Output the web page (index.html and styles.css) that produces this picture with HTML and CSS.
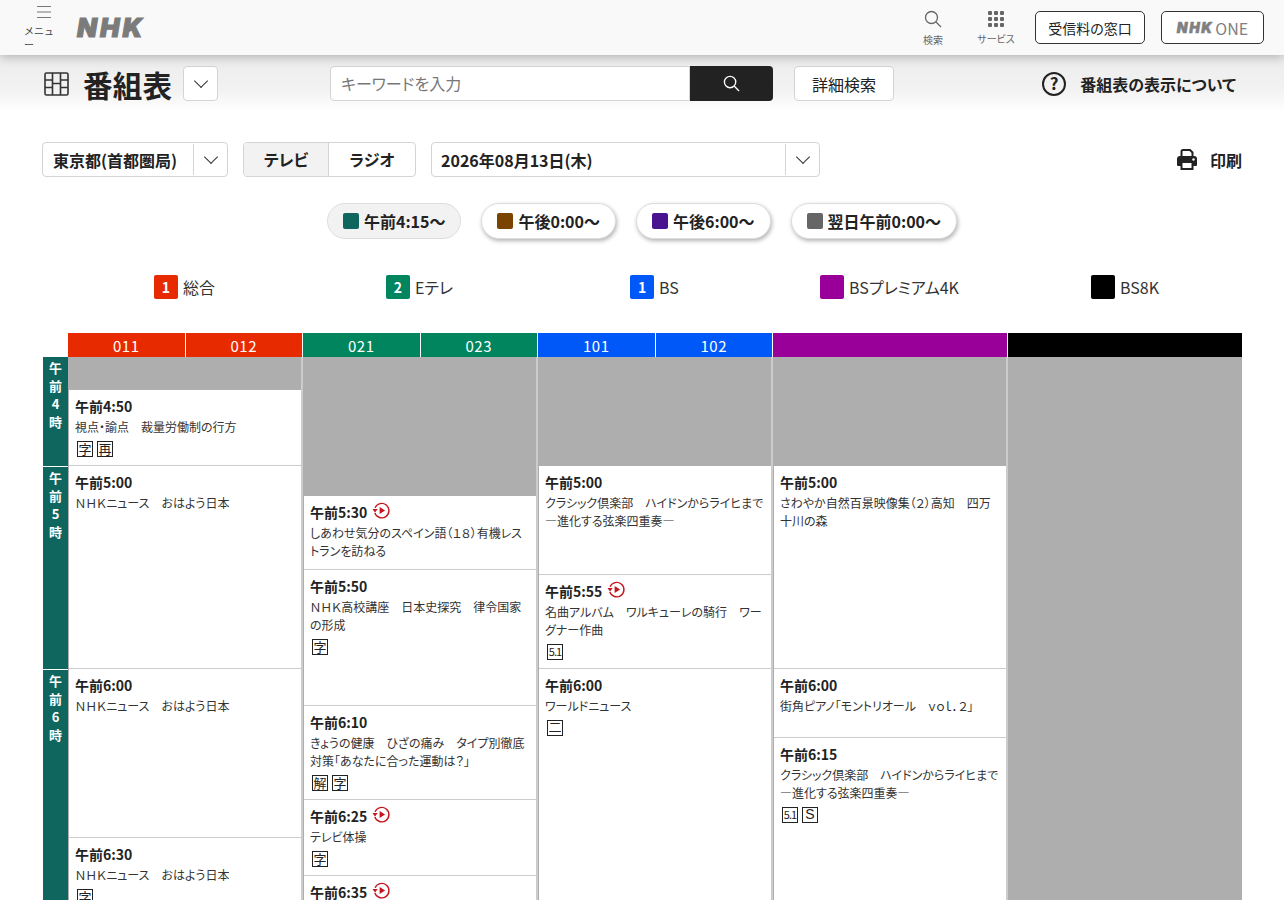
FILE: index.html
```html
<!DOCTYPE html>
<html lang="ja">
<head>
    <meta charset="UTF-8">
    <meta name="viewport" content="width=device-width, initial-scale=1.0">
    <title>番組表</title>
    <link rel="stylesheet" href="styles.css">
</head>
<body>
<div class="page">
    <header class="site-header">
        <div class="header-left">
            <div class="header-tool menu-tool">
                <svg width="16" height="14" viewBox="0 0 16 14"><path d="M1 1.5h14M1 7h14M1 12.5h14" stroke="#777" stroke-width="1.2" fill="none"/></svg>
                <span>メニュー</span>
            </div>
            <div class="nhk-logo">NHK</div>
        </div>
        <div class="header-right">
            <div class="header-tool search-tool">
                <svg width="18" height="18" viewBox="0 0 18 18"><circle cx="7.5" cy="7.5" r="6" stroke="#666" stroke-width="1.3" fill="none"/><path d="M12 12l5 5" stroke="#666" stroke-width="1.3"/></svg>
                <span>検索</span>
            </div>
            <div class="header-tool service-tool">
                <svg width="16" height="16" viewBox="0 0 16 16" fill="#666"><rect x="0" y="0" width="4" height="4" rx="1"/><rect x="6" y="0" width="4" height="4" rx="1"/><rect x="12" y="0" width="4" height="4" rx="1"/><rect x="0" y="6" width="4" height="4" rx="1"/><rect x="6" y="6" width="4" height="4" rx="1"/><rect x="12" y="6" width="4" height="4" rx="1"/><rect x="0" y="12" width="4" height="4" rx="1"/><rect x="6" y="12" width="4" height="4" rx="1"/><rect x="12" y="12" width="4" height="4" rx="1"/></svg>
                <span>サービス</span>
            </div>
            <a class="header-btn receipt-btn">受信料の窓口</a>
            <a class="header-btn one-btn"><span class="one-logo">NHK</span><span class="one-text">ONE</span></a>
        </div>
    </header>

    <section class="sub-header">
        <div class="title-area">
            <svg class="title-icon" width="25" height="24" viewBox="0 0 25 24" fill="none" stroke="#333" stroke-width="1.6"><rect x="1" y="1" width="23" height="22" rx="1.5"/><path d="M8.500 1v22M16.500 1v22M1 8h7.500M16.500 8h7.500M1 15.500h7.500M8.500 11.500h8M16.500 15.500h7.500"/></svg>
            <h1>番組表</h1>
            <button class="chevron-box"><span class="chevron"></span></button>
        </div>
        <div class="search-area">
            <div class="search-input">キーワードを入力</div>
            <div class="search-btn">
                <svg width="17" height="17" viewBox="0 0 18 18"><circle cx="7.5" cy="7.5" r="6" stroke="#fff" stroke-width="1.4" fill="none"/><path d="M12 12l5 5" stroke="#fff" stroke-width="1.4"/></svg>
            </div>
        </div>
        <button class="detail-btn">詳細検索</button>
        <div class="about-link">
            <svg width="26" height="26" viewBox="0 0 26 26"><circle cx="13" cy="13" r="11" stroke="#222" stroke-width="2" fill="none"/><text x="13" y="19" text-anchor="middle" class="about-mark">?</text></svg>
            <span>番組表の表示について</span>
        </div>
    </section>

    <main class="content">
        <div class="filter-row">
            <div class="select-box area-select">
                <span class="select-text">東京都(首都圏局)</span>
                <span class="select-arrow"><span class="chevron"></span></span>
            </div>
            <div class="media-tabs">
                <span class="media-tab active">テレビ</span>
                <span class="media-tab">ラジオ</span>
            </div>
            <div class="select-box date-select">
                <span class="select-text">2026年08月13日(木)</span>
                <span class="select-arrow"><span class="chevron"></span></span>
            </div>
            <div class="print-link">
                <svg width="20" height="21" viewBox="0 0 20 21"><path d="M4.500 8V2.500a1.500 1.500 0 0 1 1.500-1.500h7l2.500 2.500V8" fill="#fff" stroke="#222" stroke-width="2"/><path d="M3 7h14a3 3 0 0 1 3 3v6a1 1 0 0 1-1 1H1a1 1 0 0 1-1-1v-6a3 3 0 0 1 3-3z" fill="#222"/><rect x="4.500" y="13" width="11" height="7" fill="#fff" stroke="#222" stroke-width="2"/><circle cx="16.500" cy="10.500" r="1.200" fill="#fff"/></svg>
                <span>印刷</span>
            </div>
        </div>

        <div class="time-pills">
            <span class="pill active"><i class="swatch morning"></i>午前4:15〜</span>
            <span class="pill"><i class="swatch noon"></i>午後0:00〜</span>
            <span class="pill"><i class="swatch evening"></i>午後6:00〜</span>
            <span class="pill"><i class="swatch night"></i>翌日午前0:00〜</span>
        </div>

        <div class="channel-legend">
            <div class="legend-item"><span class="legend-badge ch-red">1</span>総合</div>
            <div class="legend-item"><span class="legend-badge ch-green">2</span>Eテレ</div>
            <div class="legend-item"><span class="legend-badge ch-blue">1</span>BS</div>
            <div class="legend-item"><span class="legend-badge ch-purple"></span>BSプレミアム4K</div>
            <div class="legend-item"><span class="legend-badge ch-black"></span>BS8K</div>
        </div>

        <div class="schedule">
            <div class="channel-head">
                <div class="head-cell ch-red"><span>011</span><span>012</span></div>
                <div class="head-cell ch-green"><span>021</span><span>023</span></div>
                <div class="head-cell ch-blue"><span>101</span><span>102</span></div>
                <div class="head-cell ch-purple"></div>
                <div class="head-cell ch-black"></div>
            </div>
            <div class="schedule-body">
                <div class="hours">
                    <div class="hour hour-4"><span>午</span><span>前</span><span>4</span><span>時</span></div>
                    <div class="hour hour-5"><span>午</span><span>前</span><span>5</span><span>時</span></div>
                    <div class="hour hour-6"><span>午</span><span>前</span><span>6</span><span>時</span></div>
                </div>

                <div class="column">
                    <div class="no-air" style="height:33px"></div>
                    <div class="program" style="height:76px">
                        <div class="time">午前4:50</div>
                        <div class="name">視点・諭点　裁量労働制の行方</div>
                        <div class="tags"><span class="tag">字</span><span class="tag">再</span></div>
                    </div>
                    <div class="program" style="height:203px">
                        <div class="time">午前5:00</div>
                        <div class="name">ＮＨＫニュース　おはよう日本</div>
                    </div>
                    <div class="program" style="height:169px">
                        <div class="time">午前6:00</div>
                        <div class="name">ＮＨＫニュース　おはよう日本</div>
                    </div>
                    <div class="program" style="height:120px">
                        <div class="time">午前6:30</div>
                        <div class="name">ＮＨＫニュース　おはよう日本</div>
                        <div class="tags"><span class="tag">字</span></div>
                    </div>
                </div>

                <div class="column">
                    <div class="no-air" style="height:139px"></div>
                    <div class="program" style="height:74px">
                        <div class="time">午前5:30<svg class="replay"><use href="#replay-icon"/></svg></div>
                        <div class="name">しあわせ気分のスペイン語（１８）有機レストランを訪ねる</div>
                    </div>
                    <div class="program" style="height:136px">
                        <div class="time">午前5:50</div>
                        <div class="name">ＮＨＫ高校講座　日本史探究　律令国家の形成</div>
                        <div class="tags"><span class="tag">字</span></div>
                    </div>
                    <div class="program" style="height:94px">
                        <div class="time">午前6:10</div>
                        <div class="name">きょうの健康　ひざの痛み　タイプ別徹底対策「あなたに合った運動は？」</div>
                        <div class="tags"><span class="tag">解</span><span class="tag">字</span></div>
                    </div>
                    <div class="program" style="height:76px">
                        <div class="time">午前6:25<svg class="replay"><use href="#replay-icon"/></svg></div>
                        <div class="name">テレビ体操</div>
                        <div class="tags"><span class="tag">字</span></div>
                    </div>
                    <div class="program" style="height:60px">
                        <div class="time">午前6:35<svg class="replay"><use href="#replay-icon"/></svg></div>
                    </div>
                </div>

                <div class="column">
                    <div class="no-air" style="height:109px"></div>
                    <div class="program" style="height:109px">
                        <div class="time">午前5:00</div>
                        <div class="name">クラシック倶楽部　ハイドンからライヒまで　―進化する弦楽四重奏―</div>
                    </div>
                    <div class="program" style="height:94px">
                        <div class="time">午前5:55<svg class="replay"><use href="#replay-icon"/></svg></div>
                        <div class="name">名曲アルバム　ワルキューレの騎行　ワーグナー作曲</div>
                        <div class="tags"><span class="tag tag-small">5.1</span></div>
                    </div>
                    <div class="program" style="height:240px">
                        <div class="time">午前6:00</div>
                        <div class="name">ワールドニュース</div>
                        <div class="tags"><span class="tag tag-two">二</span></div>
                    </div>
                </div>

                <div class="column">
                    <div class="no-air" style="height:109px"></div>
                    <div class="program" style="height:203px">
                        <div class="time">午前5:00</div>
                        <div class="name">さわやか自然百景映像集（２）高知　四万十川の森</div>
                    </div>
                    <div class="program" style="height:69px">
                        <div class="time">午前6:00</div>
                        <div class="name">街角ピアノ「モントリオール　ｖｏｌ．２」</div>
                    </div>
                    <div class="program" style="height:170px">
                        <div class="time">午前6:15</div>
                        <div class="name">クラシック倶楽部　ハイドンからライヒまで　―進化する弦楽四重奏―</div>
                        <div class="tags"><span class="tag tag-small">5.1</span><span class="tag tag-s">S</span></div>
                    </div>
                </div>

                <div class="column last">
                    <div class="no-air" style="height:560px"></div>
                </div>
            </div>
        </div>
    </main>
</div>

<svg class="icon-defs" width="0" height="0">
    <symbol id="replay-icon" viewBox="0 0 20 20">
        <path d="M3.2 7.200A7.600 7.600 0 1 1 3 12.500" fill="none" stroke="#c4161c" stroke-width="1.500"/>
        <path d="M0.500 8.500h5.500L3.200 12z" fill="#c4161c"/>
        <path d="M8 6.200l5.800 3.800L8 13.800z" fill="#c4161c"/>
    </symbol>
</svg>
</body>
</html>
```

FILE: styles.css
```css
* {
    margin: 0;
    padding: 0;
    box-sizing: border-box;
}

body {
    font-family: "Noto Sans CJK JP", "Noto Sans", sans-serif;
    color: #222;
    background: white;
    font-feature-settings: "palt";
}

.page {
    height: 900px;
    overflow: hidden;
}

.icon-defs {
    position: absolute;
}

/* top bar */
.site-header {
    position: relative;
    z-index: 2;
    display: flex;
    justify-content: space-between;
    height: 55px;
    padding: 0 20px 0 24px;
    background: #f9f9f9;
    box-shadow: 0 2px 10px rgba(0,0,0,0.25);
}

.header-left,
.header-right {
    display: flex;
    align-items: center;
}

.header-tool {
    display: flex;
    flex-direction: column;
    align-items: center;
    padding-top: 2px;
    font-size: 10px;
    line-height: 14px;
    color: #666;
}

.header-tool svg {
    margin-bottom: 5px;
}

.menu-tool {
    width: 39px;
    color: #444;
    font-feature-settings: normal;
}

.nhk-logo {
    margin-left: 14px;
    font-family: "Inter", sans-serif;
    font-size: 26px;
    font-weight: 900;
    font-style: italic;
    letter-spacing: 3px;
    color: #7b7b7b;
    -webkit-text-stroke: 1px #7b7b7b;
}

.search-tool {
    width: 40px;
    margin-right: 23px;
}

.service-tool {
    width: 40px;
    margin-right: 19px;
}

.header-btn {
    display: flex;
    align-items: center;
    justify-content: center;
    height: 33px;
    background: white;
    border: 1px solid #333;
    border-radius: 5px;
    font-size: 14px;
}

.receipt-btn {
    width: 110px;
    margin-right: 16px;
}

.one-btn {
    width: 103px;
    color: #808080;
}

.one-logo {
    font-family: "Inter", sans-serif;
    font-size: 14px;
    font-weight: 900;
    font-style: italic;
    letter-spacing: 1.500px;
    margin-right: 2px;
    -webkit-text-stroke: 0.5px #808080;
}

.one-text {
    font-size: 16px;
}

/* title, search */
.sub-header {
    display: flex;
    align-items: center;
    height: 57px;
    padding: 0 48px 0 44px;
    background: linear-gradient(#ececec, #f2f2f2 60%, #fff);
}

.title-area {
    display: flex;
    align-items: center;
    width: 286px;
}

.title-icon {
    margin-right: 14px;
}

h1 {
    font-size: 29.500px;
    font-weight: 700;
    line-height: 34px;
    letter-spacing: 0.2px;
    margin-right: 11px;
}

.chevron-box {
    display: flex;
    align-items: center;
    justify-content: center;
    width: 35px;
    height: 35px;
    background: white;
    border: 1px solid #d4d4d4;
    border-radius: 4px;
}

.chevron {
    display: block;
    width: 10px;
    height: 10px;
    margin-top: -5px;
    border-right: 1.300px solid #333;
    border-bottom: 1.300px solid #333;
    transform: rotate(45deg);
}

.search-area {
    display: flex;
    width: 443px;
    height: 35px;
}

.search-input {
    flex: 1;
    padding-left: 10px;
    background: white;
    border: 1px solid #d4d4d4;
    border-radius: 4px 0 0 4px;
    font-size: 16px;
    line-height: 33px;
    color: #777;
}

.search-btn {
    display: flex;
    align-items: center;
    justify-content: center;
    width: 83px;
    background: #222;
    border-radius: 0 4px 4px 0;
}

.detail-btn {
    width: 100px;
    height: 35px;
    margin-left: 21px;
    background: white;
    border: 1px solid #d4d4d4;
    border-radius: 4px;
    font-family: inherit;
    font-feature-settings: inherit;
    font-size: 16px;
    color: #222;
}

.about-link {
    display: flex;
    align-items: center;
    margin-left: auto;
    font-size: 16px;
    font-weight: 700;
}

.about-link span {
    margin-left: 13px;
}

.about-mark {
    font-size: 17px;
    font-weight: 700;
    fill: #222;
}

/* filters */
.content {
    padding: 30px 42px 0;
}

.filter-row {
    display: flex;
    align-items: center;
    height: 35px;
}

.select-box {
    display: flex;
    height: 35px;
    background: white;
    border: 1px solid #d4d4d4;
    border-radius: 4px;
}

.area-select {
    width: 186px;
}

.date-select {
    width: 389px;
    margin-left: 15px;
}

.date-select .select-text {
    padding-left: 9px;
}

.select-text {
    flex: 1;
    padding-left: 10px;
    font-size: 16px;
    font-weight: 700;
    line-height: 35px;
}

.select-arrow {
    display: flex;
    align-items: center;
    justify-content: center;
    width: 34px;
    margin: 1px 0;
    border-left: 1px solid #d4d4d4;
}

.media-tabs {
    display: flex;
    width: 173px;
    height: 35px;
    margin-left: 15px;
    border: 1px solid #d4d4d4;
    border-radius: 4px;
    overflow: hidden;
}

.media-tab {
    flex: 1;
    font-size: 16px;
    font-weight: 700;
    line-height: 33px;
    text-align: center;
}

.media-tab.active {
    flex: none;
    width: 85px;
    background: #f2f2f2;
    border-right: 1px solid #d4d4d4;
}

.print-link {
    display: flex;
    align-items: center;
    margin-left: auto;
    font-size: 16px;
    font-weight: 700;
}

.print-link span {
    margin-left: 13px;
}

/* time jump */
.time-pills {
    display: flex;
    justify-content: center;
    gap: 20px;
    margin-top: 26px;
}

.pill {
    display: flex;
    align-items: center;
    height: 36px;
    padding: 0 15px;
    background: white;
    border: 1px solid #ddd;
    border-radius: 18px;
    box-shadow: 1px 2px 4px rgba(0,0,0,0.3);
    font-size: 16px;
    font-weight: 700;
}

.pill.active {
    background: #f2f2f2;
    box-shadow: none;
}

.swatch {
    width: 16px;
    height: 16px;
    margin-right: 5px;
    border-radius: 2px;
}

.morning { background: #0f665e; }
.noon { background: #7a4400; }
.evening { background: #4a1490; }
.night { background: #666; }

/* channels */
.channel-legend {
    display: grid;
    grid-template-columns: repeat(4, 235px) 236px;
    margin-top: 36px;
    padding-left: 25px;
}

.legend-item {
    display: flex;
    align-items: center;
    justify-content: center;
    height: 24px;
    font-size: 16px;
    color: #333;
}

.legend-badge {
    width: 24px;
    height: 24px;
    margin-right: 5px;
    border-radius: 2px;
    font-size: 14px;
    font-weight: 700;
    line-height: 24px;
    text-align: center;
    color: white;
}

.ch-red { background: #e82a00; }
.ch-green { background: #00855f; }
.ch-blue { background: #0058f8; }
.ch-purple { background: #990099; }
.ch-black { background: #000; }

/* timetable */
.schedule {
    margin-top: 34px;
}

.channel-head {
    display: grid;
    grid-template-columns: repeat(4, 235px) 234px;
    height: 24px;
    margin-left: 26px;
}

.head-cell {
    display: flex;
    margin-right: 1px;
    font-size: 15px;
    line-height: 26px;
    text-align: center;
    color: white;
    letter-spacing: 0.5px;
}

.head-cell:last-child {
    margin-right: 0;
}

.head-cell span {
    flex: 1;
}

.head-cell span + span {
    border-left: 1px solid white;
}

.schedule-body {
    display: grid;
    grid-template-columns: 26px repeat(4, 235px) 234px;
}

.hours {
    margin-left: 1px;
}

.hour {
    display: flex;
    flex-direction: column;
    align-items: center;
    padding-top: 2px;
    background: #0f665e;
    color: white;
    font-size: 13px;
    font-weight: 700;
    line-height: 18px;
}

.hour-4 { height: 109px; }
.hour-5 { height: 202px; margin-top: 1px; }
.hour-6 { height: 240px; margin-top: 1px; }

.column {
    background: #aeaeae;
    border-right: 2px solid #ccc;
}

.column.last {
    border-right: 0;
}

.no-air {
    background: #aeaeae;
}

.program {
    margin-left: 1px;
    padding: 5px 6px 0;
    overflow: hidden;
    background: white;
    border-bottom: 1px solid #ccc;
}

.time {
    display: flex;
    align-items: center;
    height: 22px;
    font-size: 14px;
    font-weight: 700;
}

.replay {
    width: 19px;
    height: 19px;
    margin: -3px 0 0 5px;
}

.name {
    margin-top: 1px;
    font-size: 12px;
    line-height: 18px;
    color: #333;
}

.tags {
    display: flex;
    gap: 4px;
    margin-top: 5px;
    padding-left: 2px;
}

.tag {
    width: 16px;
    height: 16px;
    border: 1px solid #222;
    font-size: 13px;
    line-height: 13px;
    text-align: center;
}

.tag-small {
    font-size: 11px;
    letter-spacing: -1px;
}

.tag-s {
    font-family: "Liberation Sans", sans-serif;
    font-size: 14px;
}

.tag-two {
    line-height: 12px;
}
```
